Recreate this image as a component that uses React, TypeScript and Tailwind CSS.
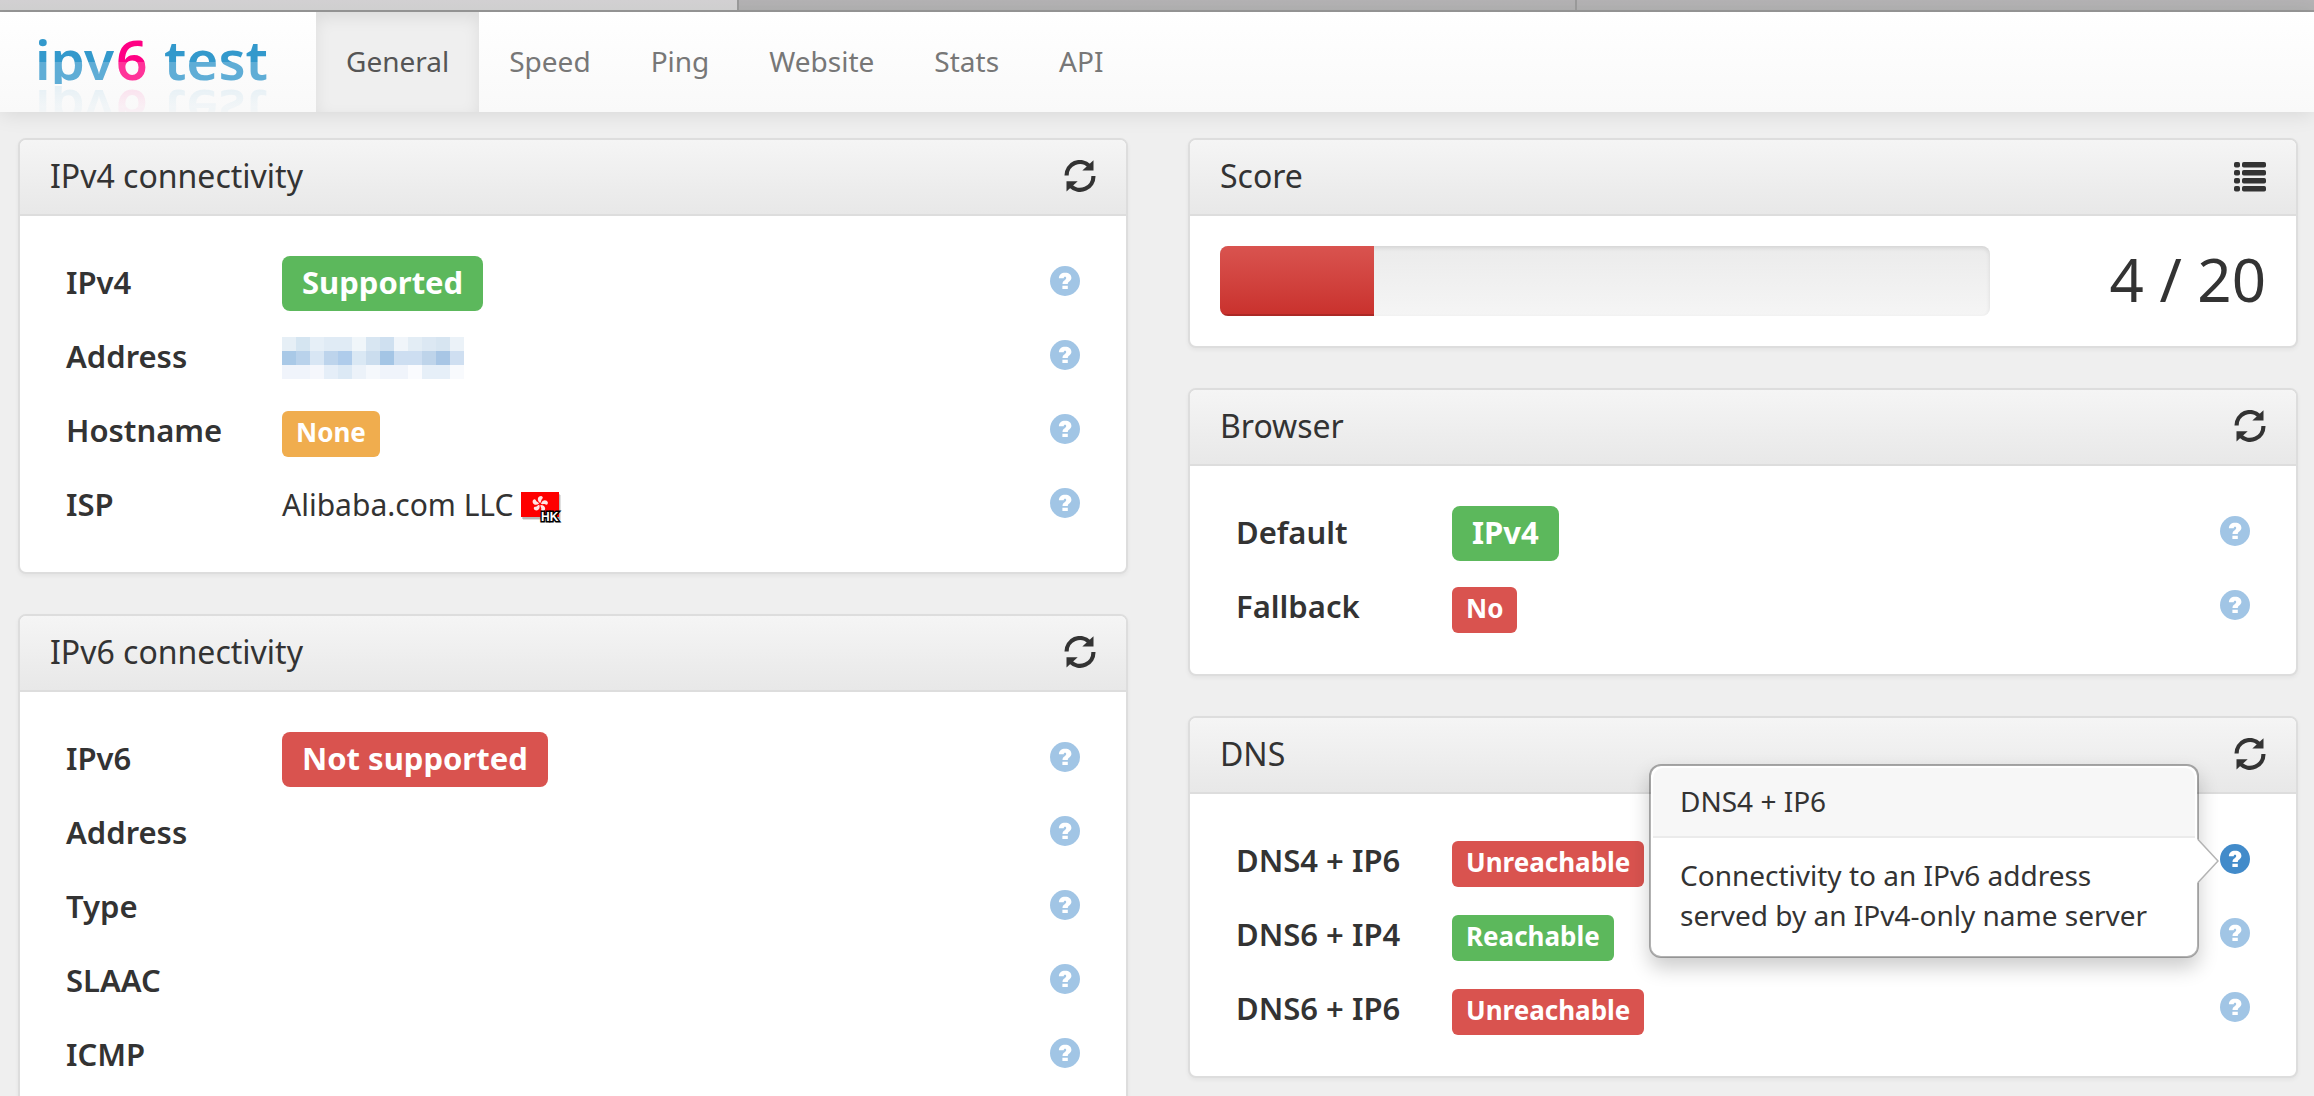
import React from "react";

function RefreshIcon() {
  return (
    <svg width="32" height="32" viewBox="0 0 31 32" aria-hidden="true">
      <g fill="none" stroke="#333" strokeWidth="4.2">
        <path d="M2.1 15.5A13.3 13.3 0 0 1 24.8 5.9" />
        <path d="M28.9 16A13.3 13.3 0 0 1 6.2 25.9" />
      </g>
      <path d="M29 0.3V10.6H17.8Z" fill="#333" />
      <path d="M2 31.5V21.2H13.2Z" fill="#333" />
    </svg>
  );
}

function ListIcon() {
  return (
    <svg width="32" height="32" viewBox="0 0 32 32" fill="#333" aria-hidden="true">
      {[2, 10, 18, 26].map((y) => (
        <g key={y}>
          <rect x="0" y={y} width="6" height="5.6" rx="1.8" />
          <rect x="8" y={y} width="24" height="5.6" rx="1.8" />
        </g>
      ))}
    </svg>
  );
}

function HelpIcon({ active }: { active?: boolean }) {
  return (
    <svg width="30" height="30" viewBox="0 0 30 30" aria-hidden="true">
      <circle cx="15" cy="15" r="15" fill={active ? "#428bca" : "#a1c5e5"} />
      <path
        fill="#fff"
        d="M8.9 12.3C8.9 8.7 11.4 6.7 15.2 6.7C19 6.7 21.4 8.7 21.4 11.8C21.4 15.2 17.9 15.4 17.8 18H12.5C12.5 14.6 16.2 14.2 16.2 12.1C16.2 11.1 15.8 10.7 15 10.7C14.2 10.7 13.7 11.2 13.7 12.3ZM12.4 19.7H17.8V22.9H12.4Z"
      />
    </svg>
  );
}

function Logo() {
  return (
    <svg width="244" height="100" viewBox="0 0 244 100" role="img" aria-label="ipv6 test">
      <defs>
        <linearGradient id="blue" gradientUnits="userSpaceOnUse" x1="0" y1="26" x2="0" y2="74">
          <stop offset="0.5" stopColor="#3399cc" />
          <stop offset="0.5" stopColor="#5fadd6" />
        </linearGradient>
        <linearGradient id="pink" gradientUnits="userSpaceOnUse" x1="0" y1="26" x2="0" y2="74">
          <stop offset="0.5" stopColor="#ff0084" />
          <stop offset="0.5" stopColor="#ff3399" />
        </linearGradient>
        <linearGradient id="fade" x1="0" y1="0" x2="0" y2="1">
          <stop offset="0" stopColor="#fff" stopOpacity="0.13" />
          <stop offset="1" stopColor="#fff" stopOpacity="0.03" />
        </linearGradient>
        <mask id="fadeMask" maskUnits="userSpaceOnUse" x="0" y="73" width="244" height="27">
          <rect x="0" y="73" width="244" height="27" fill="url(#fade)" />
        </mask>
        <clipPath id="cut">
          <rect x="0" y="0" width="244" height="72" />
        </clipPath>
        <g id="word" clipPath="url(#cut)" fontFamily="'Noto Sans', sans-serif" fontWeight="600" fontSize="55">
          <text x="-1" y="68" fill="url(#blue)">ipv</text>
          <text x="80" y="68" fill="url(#pink)">6</text>
          <text x="128" y="68" fill="url(#blue)">test</text>
        </g>
      </defs>
      <use href="#word" />
      <g mask="url(#fadeMask)">
        <use href="#word" transform="matrix(1 0 0 -1 0 146)" />
      </g>
    </svg>
  );
}

const mosaic = [
  ["#e6eff6", "#d5e5f1", "#e6eff7", "#e0ebf5", "#e0ebf5", "#f0f6fa", "#d8e6f2", "#cfe0f0", "#f0f5fa", "#e3edf5", "#dce8f3", "#d7e5f1", "#ebf2f8"],
  ["#a9c9e7", "#b9d2eb", "#d8e6f4", "#bdd4ec", "#afcceb", "#dae8f4", "#cbddee", "#a4c5e5", "#cddef1", "#cddef1", "#bed4ea", "#a8c6e5", "#cfdff1"],
  ["#f0f4fb", "#f0f4fb", "#f5f7fc", "#e5eef8", "#dce9f5", "#ecf2f9", "#f5f8fc", "#f0f4fb", "#f0f4fb", "#fafbfe", "#e6eff8", "#e6eff8", "#f8fafd"],
];

function HiddenAddress() {
  return (
    <svg width="182" height="42" viewBox="0 0 182 42" className="mt-[7px] inline-block align-top" role="img" aria-label="Hidden address" shapeRendering="crispEdges">
      {mosaic.map((row, y) =>
        row.map((color, x) => <rect key={`${x}-${y}`} x={x * 14} y={y * 14} width="14" height="14" fill={color} />)
      )}
    </svg>
  );
}

function HongKongFlag() {
  return (
    <svg width="42" height="32" viewBox="0 0 42 32" className="mt-3.5 ml-2 inline-block align-top" role="img" aria-label="Hong Kong">
      <rect x="2" y="3" width="38" height="25" fill="#000" opacity="0.12" />
      <rect x="1" y="2" width="38" height="25" fill="#000" opacity="0.18" />
      <rect x="0" y="0" width="38" height="25" fill="#fe0000" />
      <g fill="#ffe3e3" transform="translate(19 12)">
        {[8, 80, 152, 224, 296].map((a) => (
          <path key={a} transform={`rotate(${a})`} d="M0 -1C-4 -3 -3.5 -7.5 0 -8C2.4 -7.6 2.2 -6 1.2 -5C0.4 -4 1 -2 0 -1Z" />
        ))}
      </g>
      <text x="20" y="29" fontFamily="'Liberation Sans', sans-serif" fontWeight="700" fontSize="12" fill="#fff" stroke="#000" strokeWidth="3" paintOrder="stroke">
        HK
      </text>
    </svg>
  );
}

function BigBadge({ color, children }: { color: string; children: React.ReactNode }) {
  return <span className={`inline-block rounded-lg px-5 pb-[3px] text-[31px] leading-[52px] font-bold text-white ${color}`}>{children}</span>;
}

function SmallBadge({ color, children }: { color: string; children: React.ReactNode }) {
  return <span className={`inline-block rounded-md px-3.5 pt-px pb-[5px] text-[26px] leading-10 font-bold text-white ${color}`}>{children}</span>;
}

const GREEN = "bg-[#5cb85c]";
const RED = "bg-[#d9534f]";
const ORANGE = "bg-[#f0ad4e]";

function Panel({ title, icon, action, children }: { title: string; icon: React.ReactNode; action: string; children: React.ReactNode }) {
  return (
    <section className="rounded-lg border-2 border-[#dddddd] bg-white shadow-[0_2px_4px_rgba(0,0,0,0.05)]">
      <div className="flex h-[76px] items-center justify-between rounded-t-md border-b-2 border-[#dddddd] bg-linear-to-b from-[#f5f5f5] to-[#e8e8e8] px-[30px] pb-0.5">
        <h2 className="text-[32px] leading-9">{title}</h2>
        <button type="button" aria-label={action}>{icon}</button>
      </div>
      <div className="p-[30px]">{children}</div>
    </section>
  );
}

type Row = { label: string; value?: React.ReactNode; tip?: string[] };

function Popover({ title, lines }: { title: string; lines: string[] }) {
  return (
    <div role="tooltip" className="absolute -top-20 right-full z-10 mr-[21px] w-[550px] rounded-xl border-2 border-black/30 bg-white bg-clip-padding p-0.5 text-left text-[28px] shadow-[0_10px_20px_rgba(0,0,0,0.2)]">
      <h3 className="rounded-t-[10px] border-b-2 border-[#ebebeb] bg-[#f7f7f7] px-[27px] pt-[15px] pb-[17px] leading-9">{title}</h3>
      <p className="px-[27px] pt-[17px] pb-[19px] leading-10 whitespace-nowrap">
        {lines.map((line) => (
          <span key={line} className="block">{line}</span>
        ))}
      </p>
      <svg className="absolute top-1/2 left-full -mt-[22px]" width="22" height="44" viewBox="0 0 22 44" aria-hidden="true">
        <path d="M0 0L21 22L0 44Z" fill="#fff" />
        <path d="M1 0.5L21 22L1 43.5" fill="none" stroke="#b3b3b3" strokeWidth="1.5" />
      </svg>
    </div>
  );
}

function Rows({ rows }: { rows: Row[] }) {
  return (
    <table className="w-full table-fixed text-[30px] leading-[54px]">
      <tbody>
        {rows.map((row) => (
          <tr key={row.label} className="h-[74px]">
            <th scope="row" className="w-[232px] pt-[9px] pl-4 text-left align-baseline text-[31px] font-semibold whitespace-nowrap">{row.label}</th>
            <td className="pt-[9px] align-baseline whitespace-nowrap">{row.value}</td>
            <td className="w-[46px] pt-5 align-top">
              <div className="relative h-[30px] w-[30px]">
                <button type="button" className="block" aria-label={`Help: ${row.label}`}>
                  <HelpIcon active={!!row.tip} />
                </button>
                {row.tip && <Popover title={row.label} lines={row.tip} />}
              </div>
            </td>
          </tr>
        ))}
      </tbody>
    </table>
  );
}

export default function App() {
  return (
    <div className="h-screen overflow-hidden bg-[#efefef] font-['Noto_Sans',sans-serif] text-[#333333]">
      <div className="flex h-3 border-b-2 border-[#999999] bg-linear-to-b from-[#b5b3b5] to-[#b3b3b3]">
        <div className="flex-[738] border-r-2 border-[#999999] bg-linear-to-b from-[#d2d0d2] to-[#cfcfcf]" />
        <div className="flex-[838] border-r-2 border-[#999999]" />
        <div className="flex-[738]" />
      </div>

      <header className="flex h-[100px] bg-linear-to-b from-white to-[#f9f9f9] pl-9 shadow-[0_2px_20px_rgba(0,0,0,0.1)]">
        <a href="#home" className="mr-9 block">
          <Logo />
        </a>
        <nav className="flex text-[28px] leading-10 text-[#777777]">
          <a href="#general" aria-current="page" className="flex items-center bg-[#efefef] px-[30px] pb-0.5 text-[#555555] shadow-[inset_0_6px_16px_rgba(0,0,0,0.08)]">General</a>
          {["Speed", "Ping", "Website", "Stats", "API"].map((item) => (
            <a key={item} href={`#${item.toLowerCase()}`} className="flex items-center px-[30px] pb-0.5">{item}</a>
          ))}
        </nav>
      </header>

      <main className="grid grid-cols-2 items-start gap-[60px] pt-[26px] pr-4 pl-[18px]">
        <div className="flex flex-col gap-10">
          <Panel title="IPv4 connectivity" icon={<RefreshIcon />} action="Refresh IPv4">
            <Rows
              rows={[
                { label: "IPv4", value: <BigBadge color={GREEN}>Supported</BigBadge> },
                { label: "Address", value: <HiddenAddress /> },
                { label: "Hostname", value: <SmallBadge color={ORANGE}>None</SmallBadge> },
                { label: "ISP", value: <>Alibaba.com LLC<HongKongFlag /></> },
              ]}
            />
          </Panel>
          <Panel title="IPv6 connectivity" icon={<RefreshIcon />} action="Refresh IPv6">
            <Rows
              rows={[
                { label: "IPv6", value: <BigBadge color={RED}>Not supported</BigBadge> },
                { label: "Address" },
                { label: "Type" },
                { label: "SLAAC" },
                { label: "ICMP" },
              ]}
            />
          </Panel>
        </div>

        <div className="flex flex-col gap-10">
          <Panel title="Score" icon={<ListIcon />} action="Score details">
            <div className="flex items-center">
              <div role="progressbar" aria-label="Score" aria-valuenow={4} aria-valuemin={0} aria-valuemax={20} className="h-[70px] flex-1 overflow-hidden rounded-lg bg-linear-to-b from-[#ebebeb] to-[#f5f5f5] shadow-[inset_0_2px_4px_rgba(0,0,0,0.1)]">
                <div className="h-full w-1/5 bg-linear-to-b from-[#d9534f] to-[#c9302c] shadow-[inset_0_-2px_0_rgba(0,0,0,0.15)]" />
              </div>
              <div className="w-[276px] pb-1 text-right text-[60px] leading-[66px]">4 / 20</div>
            </div>
          </Panel>
          <Panel title="Browser" icon={<RefreshIcon />} action="Refresh browser">
            <Rows
              rows={[
                { label: "Default", value: <BigBadge color={GREEN}>IPv4</BigBadge> },
                { label: "Fallback", value: <SmallBadge color={RED}>No</SmallBadge> },
              ]}
            />
          </Panel>
          <Panel title="DNS" icon={<RefreshIcon />} action="Refresh DNS">
            <Rows
              rows={[
                {
                  label: "DNS4 + IP6",
                  value: <SmallBadge color={RED}>Unreachable</SmallBadge>,
                  tip: ["Connectivity to an IPv6 address", "served by an IPv4-only name server"],
                },
                { label: "DNS6 + IP4", value: <SmallBadge color={GREEN}>Reachable</SmallBadge> },
                { label: "DNS6 + IP6", value: <SmallBadge color={RED}>Unreachable</SmallBadge> },
              ]}
            />
          </Panel>
        </div>
      </main>
    </div>
  );
}
